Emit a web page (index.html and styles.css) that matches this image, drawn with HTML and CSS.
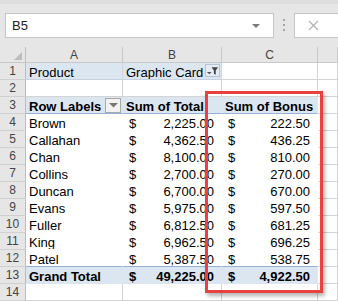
FILE: index.html
```html
<!DOCTYPE html>
<html>
    <head>
        <link rel="stylesheet" href="styles.css">
    </head>
    <body>
    <div id="window">
        <div class="formula-bar">
            <div class="name-box">
                <span class="name-text">B5</span>
                <svg class="name-arrow" width="8" height="5" viewBox="0 0 8 5"><path d="M0 0h8L4 4z" fill="#7a7a7a"/></svg>
            </div>
            <div class="grip"><i></i><i></i><i></i></div>
            <div class="fx-box">
                <svg width="11" height="11" viewBox="0 0 11 11"><path d="M1 1L10 10M10 1L1 10" stroke="#b4b4b4" stroke-width="1.3"/></svg>
            </div>
        </div>
        <div class="sheet">
            <!-- column headers -->
            <div class="corner"><span class="corner-tri"></span></div>
            <div class="colh">A</div>
            <div class="colh">B</div>
            <div class="colh">C</div>
            <div class="colh"></div>

            <div class="rowh">1</div>
            <div class="cell pv-filter">Product</div>
            <div class="cell pv-filter">Graphic Card
                <span class="filter-btn">
                    <svg width="14" height="12" viewBox="0 0 14 12"><path d="M1 7h5L3.5 9.5z" fill="#555"/><path d="M6 2h7L10.5 5.5V10L8.5 9V5.5z" fill="#444"/></svg>
                </span>
            </div>
            <div class="cell"></div>
            <div class="cell"></div>

            <div class="rowh">2</div>
            <div class="cell"></div>
            <div class="cell"></div>
            <div class="cell"></div>
            <div class="cell"></div>

            <div class="rowh">3</div>
            <div class="cell pv-head">Row Labels
                <span class="drop-btn">
                    <svg width="9" height="5" viewBox="0 0 9 5"><path d="M0 0h9L4.5 4.5z" fill="#777"/></svg>
                </span>
            </div>
            <div class="cell pv-head">Sum of Total</div>
            <div class="cell pv-head">Sum of Bonus</div>
            <div class="cell"></div>

            <div class="rowh">4</div>
            <div class="cell pv">Brown</div>
            <div class="cell pv acct"><span>$</span><span>2,225.00</span></div>
            <div class="cell pv acct"><span>$</span><span>222.50</span></div>
            <div class="cell"></div>

            <div class="rowh">5</div>
            <div class="cell pv">Callahan</div>
            <div class="cell pv acct"><span>$</span><span>4,362.50</span></div>
            <div class="cell pv acct"><span>$</span><span>436.25</span></div>
            <div class="cell"></div>

            <div class="rowh">6</div>
            <div class="cell pv">Chan</div>
            <div class="cell pv acct"><span>$</span><span>8,100.00</span></div>
            <div class="cell pv acct"><span>$</span><span>810.00</span></div>
            <div class="cell"></div>

            <div class="rowh">7</div>
            <div class="cell pv">Collins</div>
            <div class="cell pv acct"><span>$</span><span>2,700.00</span></div>
            <div class="cell pv acct"><span>$</span><span>270.00</span></div>
            <div class="cell"></div>

            <div class="rowh">8</div>
            <div class="cell pv">Duncan</div>
            <div class="cell pv acct"><span>$</span><span>6,700.00</span></div>
            <div class="cell pv acct"><span>$</span><span>670.00</span></div>
            <div class="cell"></div>

            <div class="rowh">9</div>
            <div class="cell pv">Evans</div>
            <div class="cell pv acct"><span>$</span><span>5,975.00</span></div>
            <div class="cell pv acct"><span>$</span><span>597.50</span></div>
            <div class="cell"></div>

            <div class="rowh">10</div>
            <div class="cell pv">Fuller</div>
            <div class="cell pv acct"><span>$</span><span>6,812.50</span></div>
            <div class="cell pv acct"><span>$</span><span>681.25</span></div>
            <div class="cell"></div>

            <div class="rowh">11</div>
            <div class="cell pv">King</div>
            <div class="cell pv acct"><span>$</span><span>6,962.50</span></div>
            <div class="cell pv acct"><span>$</span><span>696.25</span></div>
            <div class="cell"></div>

            <div class="rowh">12</div>
            <div class="cell pv last">Patel</div>
            <div class="cell pv acct last"><span>$</span><span>5,387.50</span></div>
            <div class="cell pv acct last"><span>$</span><span>538.75</span></div>
            <div class="cell"></div>

            <div class="rowh">13</div>
            <div class="cell pv-total">Grand Total</div>
            <div class="cell pv-total acct"><span>$</span><span>49,225.00</span></div>
            <div class="cell pv-total acct"><span>$</span><span>4,922.50</span></div>
            <div class="cell"></div>

            <div class="rowh">14</div>
            <div class="cell"></div>
            <div class="cell"></div>
            <div class="cell"></div>
            <div class="cell"></div>

            <div class="highlight"></div>
        </div>
    </div>
    </body>
</html>
```

FILE: styles.css
```css
body {
    margin: 0;
    font-family: "Liberation Sans", Arial, sans-serif;
    background: #ffffff;
}
#window {
    width: 338px;
    height: 301px;
    overflow: hidden;
}
.formula-bar {
    display: flex;
    align-items: flex-start;
    height: 47px;
    box-sizing: border-box;
    padding: 13px 0 0 5px;
    background: #e6e6e6;
    border-top: 4px solid #dedede;
    padding-top: 9px;
}
.name-box {
    display: flex;
    align-items: center;
    justify-content: space-between;
    width: 269px;
    height: 25px;
    box-sizing: border-box;
    padding: 0 13px 0 6px;
    background: #ffffff;
    border: 1px solid #c6c6c6;
}
.name-text {
    font-size: 13px;
    color: #222;
}
.name-arrow {
    margin-top: 1px;
}
.grip {
    display: flex;
    flex-direction: column;
    gap: 3px;
    width: 20px;
    padding-top: 6px;
    align-items: center;
}
.grip i {
    width: 2px;
    height: 2px;
    background: #a6a6a6;
}
.fx-box {
    display: flex;
    align-items: center;
    flex: 1;
    height: 25px;
    box-sizing: border-box;
    padding-left: 13px;
    background: #ffffff;
    border: 1px solid #c6c6c6;
    border-right: none;
}
.sheet {
    position: relative;
    display: grid;
    grid-template-columns: 26px 97px 99px 96px 1fr;
    grid-template-rows: 16px;
    grid-auto-rows: 17px;
    font-size: 13px;
    color: #000;
}
.sheet > div {
    box-sizing: border-box;
}
.corner, .colh, .rowh {
    background: #e6e6e6;
    color: #444;
    font-size: 12px;
    border-right: 1px solid #c8c8c8;
    border-bottom: 1px solid #c8c8c8;
}
.corner {
    position: relative;
    border-right-color: #bdbdbd;
}
.corner-tri {
    position: absolute;
    right: 3px;
    bottom: 2px;
    width: 0;
    height: 0;
    border-left: 8px solid transparent;
    border-bottom: 8px solid #bdbdbd;
}
.colh {
    text-align: center;
    line-height: 15px;
    padding-top: 1px;
}
.rowh {
    text-align: center;
    line-height: 16px;
    border-right-color: #bdbdbd;
    border-bottom-color: #d0d0d0;
}
.cell {
    display: flex;
    align-items: flex-end;
    line-height: 13px;
    padding: 0 3px;
    white-space: nowrap;
    overflow: hidden;
    border-right: 1px solid #d4d4d4;
    border-bottom: 1px solid #d4d4d4;
}
.pv {
    border-color: #ffffff;
}
.pv.last {
    border-bottom-color: #95b3d7;
}
.pv-filter {
    position: relative;
    background: #dce6f1;
    border-bottom-color: #c6d2e0;
}
.pv-head {
    position: relative;
    font-weight: bold;
    background: #dce6f1;
    border-right-color: #dce6f1;
    border-bottom-color: #95b3d7;
}
.pv-total {
    font-weight: bold;
    background: #dce6f1;
    border-right-color: #dce6f1;
    border-bottom-color: #dce6f1;
}
.acct {
    justify-content: space-between;
    padding: 0 7px 0 6px;
}
.filter-btn {
    position: absolute;
    right: 1px;
    top: 1px;
    display: flex;
    align-items: center;
    justify-content: center;
    width: 15px;
    height: 13px;
    box-sizing: border-box;
    background: #e4ebf4;
    border: 1px solid #b8c4d2;
}
.drop-btn {
    position: absolute;
    right: 1px;
    top: 1px;
    display: flex;
    align-items: center;
    justify-content: center;
    width: 16px;
    height: 15px;
    box-sizing: border-box;
    background: #f2f2f2;
    border: 1px solid #a9a9a9;
}
.highlight {
    position: absolute;
    left: 205px;
    top: 44px;
    width: 118px;
    height: 202px;
    box-sizing: border-box;
    border: 3px solid #e8413f;
    box-shadow: 2px 3px 4px rgba(0, 0, 0, 0.3);
}
```
